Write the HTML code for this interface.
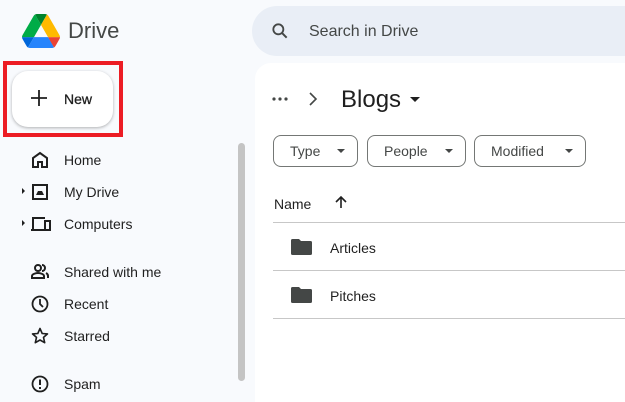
<!DOCTYPE html><html><head><style>
*{margin:0;padding:0;box-sizing:border-box}
html,body{width:625px;height:402px;overflow:hidden}
body{background:#f8fafd;font-family:"Liberation Sans",Arial,sans-serif;color:#1f1f1f;position:relative}
.a{position:absolute}
.nav{position:absolute;left:64px;font-size:14px;color:#1f1f1f}
.ic{position:absolute;left:30px}
.chip{position:absolute;top:135px;height:32px;border:1px solid #747775;border-radius:8px;font-size:14px;color:#444746;padding-left:16px;line-height:30px}
.chip:after{content:"";position:absolute;right:12px;top:13px;border-left:4px solid transparent;border-right:4px solid transparent;border-top:4px solid #444746}
.line{position:absolute;left:273px;right:0;height:1px;background:#c7c7c7}
</style></head><body>
<svg class="a" style="left:22px;top:14px" width="38" height="34" viewBox="0 0 87.3 78"><path d="m6.6 66.85 3.85 6.650c.8 1.4 1.95 2.5 3.3 3.3l13.75-23.8h-27.5c0 1.55.4 3.1 1.2 4.5z" fill="#0066da"/><path d="m43.65 25-13.75-23.8c-1.35.8-2.5 1.9-3.3 3.3l-25.4 44a9.06 9.06 0 0 0 -1.2 4.5h27.5z" fill="#00ac47"/><path d="m73.55 76.8c1.35-.8 2.5-1.9 3.3-3.3l1.6-2.75 7.65-13.25c.8-1.4 1.2-2.95 1.2-4.5h-27.502l5.852 11.5z" fill="#ea4335"/><path d="m43.65 25 13.75-23.8c-1.35-.8-2.9-1.200-4.5-1.2h-18.5c-1.6 0-3.15.45-4.5 1.2z" fill="#00832d"/><path d="m59.8 53h-32.3l-13.75 23.8c1.35.8 2.9 1.2 4.5 1.2h50.8c1.6 0 3.15-.45 4.5-1.2z" fill="#2684fc"/><path d="m73.4 26.5-12.7-22c-.8-1.4-1.95-2.5-3.3-3.3l-13.75 23.8 16.15 28h27.45c0-1.55-.4-3.1-1.2-4.5z" fill="#ffba00"/></svg>
<div class="a" style="left:68px;top:18px;font-size:22px;color:#444746">Drive</div>
<div class="a" style="left:252px;top:6px;width:400px;height:50px;background:#e9eef6;border-radius:25px"></div>
<svg class="a" style="left:270px;top:21px" width="20" height="20" viewBox="0 0 24 24"><circle cx="10" cy="10" r="6" fill="none" stroke="#444746" stroke-width="2.2"/><path d="M14.5 14.5 20 20" stroke="#444746" stroke-width="2.4"/></svg>
<div class="a" style="left:309px;top:23px;font-size:16px;color:#444746">Search in Drive</div>
<div class="a" style="left:3px;top:61px;width:120px;height:76px;border:4px solid #ec1c24"></div>
<div class="a" style="left:12px;top:71px;width:101px;height:56px;background:#fff;border-radius:16px;box-shadow:0 1px 3px rgba(0,0,0,.3)"></div>
<svg class="a" style="left:31px;top:90px" width="16" height="16" viewBox="0 0 16 16"><path d="M8 0v16M0 8h16" stroke="#1f1f1f" stroke-width="1.8"/></svg>
<div class="a" style="left:64px;top:91px;font-size:14px;color:#1f1f1f;-webkit-text-stroke:0.3px #1f1f1f">New</div>
<svg class="ic" style="top:150px" width="20" height="20" viewBox="0 0 20 20"><path d="M3 17V8l7-5 7 5v9h-5v-5H8v5z" fill="none" stroke="#1f1f1f" stroke-width="2"/></svg>
<div class="nav" style="top:152px">Home</div>
<div class="a" style="left:22px;top:188px;border-top:3px solid transparent;border-bottom:3px solid transparent;border-left:3px solid #1f1f1f"></div>
<svg class="ic" style="top:182px" width="20" height="20" viewBox="0 0 20 20"><rect x="3" y="3" width="14" height="14" fill="none" stroke="#1f1f1f" stroke-width="2"/><path d="M6 13h8l-2-4h-4z" fill="#1f1f1f"/></svg>
<div class="nav" style="top:184px">My Drive</div>
<div class="a" style="left:22px;top:220px;border-top:3px solid transparent;border-bottom:3px solid transparent;border-left:3px solid #1f1f1f"></div>
<svg class="ic" style="top:214px" width="22" height="20" viewBox="0 0 22 20"><path d="M3 15V4h12M1 16h13" fill="none" stroke="#1f1f1f" stroke-width="2"/><rect x="15" y="7" width="5" height="9" fill="none" stroke="#1f1f1f" stroke-width="2"/></svg>
<div class="nav" style="top:216px">Computers</div>
<svg class="ic" style="top:262px" width="20" height="20" viewBox="0 0 20 20"><circle cx="8" cy="6" r="3" fill="none" stroke="#1f1f1f" stroke-width="2"/><path d="M2 16v-2c0-2 4-3 6-3s6 1 6 3v2z" fill="none" stroke="#1f1f1f" stroke-width="2"/><path d="M12 3a3 3 0 0 1 0 6M16 11c1 .5 2 1.5 2 3v2" fill="none" stroke="#1f1f1f" stroke-width="2"/></svg>
<div class="nav" style="top:264px">Shared with me</div>
<svg class="ic" style="top:294px" width="20" height="20" viewBox="0 0 20 20"><circle cx="10" cy="10" r="7.5" fill="none" stroke="#1f1f1f" stroke-width="1.8"/><path d="M10 5v5l3 3" fill="none" stroke="#1f1f1f" stroke-width="1.8"/></svg>
<div class="nav" style="top:296px">Recent</div>
<svg class="ic" style="top:326px" width="20" height="20" viewBox="0 0 20 20"><path d="M10 2.5l2.2 5 5.3.4-4 3.5 1.2 5.3L10 14l-4.7 2.7 1.2-5.3-4-3.5 5.3-.4z" fill="none" stroke="#1f1f1f" stroke-width="1.6" stroke-linejoin="round"/></svg>
<div class="nav" style="top:328px">Starred</div>
<svg class="ic" style="top:374px" width="20" height="20" viewBox="0 0 20 20"><circle cx="10" cy="10" r="7.5" fill="none" stroke="#1f1f1f" stroke-width="1.8"/><path d="M10 5.5v5.5M10 13v2" stroke="#1f1f1f" stroke-width="2"/></svg>
<div class="nav" style="top:376px">Spam</div>
<div class="a" style="left:238px;top:143px;width:7px;height:238px;background:#c4c4c4;border-radius:4px"></div>
<div class="a" style="left:255px;top:63px;width:370px;height:339px;background:#fff;border-radius:16px 0 0 0"></div>
<svg class="a" style="left:272px;top:97px" width="16" height="4" viewBox="0 0 16 4"><circle cx="2" cy="2" r="1.6" fill="#444746"/><circle cx="8" cy="2" r="1.6" fill="#444746"/><circle cx="14" cy="2" r="1.6" fill="#444746"/></svg>
<svg class="a" style="left:307px;top:91px" width="12" height="16" viewBox="0 0 12 16"><path d="M3 2l6 6-6 6" fill="none" stroke="#444746" stroke-width="1.6"/></svg>
<div class="a" style="left:341px;top:86px;font-size:24px;color:#1f1f1f">Blogs</div>
<div class="a" style="left:410px;top:97px;border-left:5px solid transparent;border-right:5px solid transparent;border-top:5px solid #1f1f1f"></div>
<div class="chip" style="left:273px;width:85px">Type</div>
<div class="chip" style="left:367px;width:99px">People</div>
<div class="chip" style="left:474px;width:112px">Modified</div>
<div class="a" style="left:274px;top:196px;font-size:14px">Name</div>
<svg class="a" style="left:334px;top:195px" width="14" height="14" viewBox="0 0 14 14"><path d="M7 13V2M2 7l5-5 5 5" fill="none" stroke="#1f1f1f" stroke-width="1.6"/></svg>
<div class="line" style="top:222px"></div>
<svg class="a" style="left:291px;top:239px" width="21" height="16" viewBox="0 0 21 16"><path d="M0 1.5Q0 0 1.5 0H8l2 2h9.5Q21 2 21 3.5v11q0 1.5-1.5 1.5h-18Q0 16 0 14.5z" fill="#444746"/></svg>
<div class="a" style="left:330px;top:240px;font-size:14px">Articles</div>
<div class="line" style="top:270px"></div>
<svg class="a" style="left:291px;top:287px" width="21" height="16" viewBox="0 0 21 16"><path d="M0 1.5Q0 0 1.5 0H8l2 2h9.5Q21 2 21 3.5v11q0 1.5-1.5 1.5h-18Q0 16 0 14.5z" fill="#444746"/></svg>
<div class="a" style="left:330px;top:288px;font-size:14px">Pitches</div>
<div class="line" style="top:318px"></div>
</body></html>
